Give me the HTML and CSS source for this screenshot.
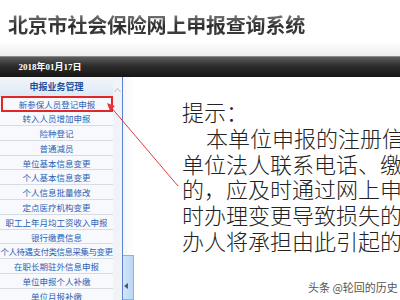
FILE: index.html
```html
<!DOCTYPE html>
<html lang="zh">
<head>
<meta charset="utf-8">
<link rel="stylesheet" href="styles.css">
</head>
<body>
<div class="page">
  <header class="top">
    <h1 class="title">北京市社会保险网上申报查询系统</h1>
  </header>
  <div class="bar">
    <div class="date">2018年01月17日</div>
  </div>
  <div class="main">
    <nav class="side">
      <div class="side-head">申报业务管理</div>
      <ul class="menu">
        <li class="hl">新参保人员登记申报</li>
        <li>转入人员增加申报</li>
        <li>险种登记</li>
        <li>普通减员</li>
        <li>单位基本信息变更</li>
        <li>个人基本信息变更</li>
        <li>个人信息批量修改</li>
        <li>定点医疗机构变更</li>
        <li>职工上年月均工资收入申报</li>
        <li>银行缴费信息</li>
        <li class="wide">个人待遇支付类信息采集与变更</li>
        <li>在职长期驻外信息申报</li>
        <li>单位申报个人补缴</li>
        <li>单位月报补缴</li>
      </ul>
    </nav>
    <div class="track"><span class="up"></span></div>
    <div class="split">
      <div class="toggle"><span class="left-arrow"></span></div>
    </div>
    <section class="content">
      <p class="line">提示：</p>
      <p class="line indent">本单位申报的注册信</p>
      <p class="line">单位法人联系电话、缴</p>
      <p class="line">的，应及时通过网上申</p>
      <p class="line">时办理变更导致损失的</p>
      <p class="line">办人将承担由此引起的</p>
    </section>
  </div>
  <svg class="arrow" width="400" height="300" viewBox="0 0 400 300">
    <line x1="110" y1="106" x2="178" y2="186" stroke="#e23a3a" stroke-width="1"/>
    <polygon points="107,103 115,106 110,111" fill="#e23a3a"/>
  </svg>
  <div class="mark">头条 @轮回的历史</div>
</div>
</body>
</html>
```
FILE: styles.css
```css
* { box-sizing: border-box; margin: 0; padding: 0; }
html, body { width: 400px; height: 300px; overflow: hidden; background: #fff; }
body { font-family: "Noto Sans CJK SC", "Noto Sans", sans-serif; }
.page { position: relative; width: 400px; height: 300px; overflow: hidden; }

.top {
  height: 56px;
  padding: 12px 0 0 8px;
  background: linear-gradient(#ffffff 0%, #ffffff 75%, #ececec 100%);
}
.title {
  font-size: 20px;
  line-height: 26px;
  font-weight: 700;
  letter-spacing: -0.2px;
  color: #444;
  background: linear-gradient(#8c8c8c 0%, #2a2a2a 55%, #4a4a4a 100%);
  -webkit-background-clip: text;
  background-clip: text;
  -webkit-text-fill-color: transparent;
  white-space: nowrap;
}

.bar {
  height: 21px;
  border-top: 1px solid #8a8a8a;
  background: linear-gradient(#5c5c5c 0%, #2c2c2c 45%, #161616 100%);
  display: flex;
  align-items: center;
}
.date {
  width: 100px;
  text-align: center;
  color: #fff;
  font-family: "Liberation Serif", "Noto Sans CJK SC", serif;
  font-weight: 700;
  font-size: 9px;
  line-height: 12px;
}

.main { display: flex; height: 223px; }

.side { width: 113px; flex: none; background: #f7f9fc; overflow: hidden; }
.side-head {
  height: 19.5px;
  line-height: 19px;
  text-align: center;
  font-size: 9px;
  font-weight: 700;
  color: #1f4f9f;
  background: linear-gradient(#f2f6fb, #dde8f4);
  border-bottom: 1px solid #d3dbe5;
}
.menu { list-style: none; }
.menu li {
  height: 14.8px;
  line-height: 14px;
  text-align: center;
  font-size: 8.5px;
  color: #2b5fb5;
  border-bottom: 1px solid #d6dce4;
  white-space: nowrap;
}
.menu li.wide { letter-spacing: -0.5px; }
.menu li.hl {
  outline: 2px solid #e02828;
  outline-offset: -1px;
  margin: 0 1px 0 2px;
}

.track {
  width: 9px;
  flex: none;
  background: #f1f3f7;
}
.up {
  display: block;
  width: 5px; height: 5px;
  margin: 12px 0 0 2px;
  border-left: 1px solid #c6cbd2;
  border-top: 1px solid #c6cbd2;
  transform: rotate(45deg);
}

.split {
  width: 12px;
  flex: none;
  border-left: 1px solid #5b82cf;
  background: linear-gradient(90deg, #f4f6fa, #ffffff);
  display: flex;
  flex-direction: column;
  justify-content: flex-end;
}
.toggle {
  height: 45px;
  background: linear-gradient(90deg, #d4e6fb, #b9d6f6);
  border: 1px solid #8fb2e0;
  border-left: none;
  display: flex;
  align-items: center;
  padding: 16px 0 0 1px;
}
.left-arrow {
  width: 0; height: 0;
  border-top: 3px solid transparent;
  border-bottom: 3px solid transparent;
  border-right: 4px solid #4a5a70;
}

.content {
  flex: 1;
  padding: 22px 0 0 48px;
  overflow: hidden;
  background: #fff;
}
.line {
  font-size: 22px;
  line-height: 25.8px;
  color: #222;
  white-space: nowrap;
  font-weight: 300;
}
.indent { padding-left: 24px; }

.arrow { position: absolute; left: 0; top: 0; pointer-events: none; }

.mark {
  position: absolute;
  left: 308px;
  top: 280px;
  font-size: 11px;
  line-height: 14px;
  color: #555;
  text-shadow: 0 0 2px #fff;
  white-space: nowrap;
}
```
